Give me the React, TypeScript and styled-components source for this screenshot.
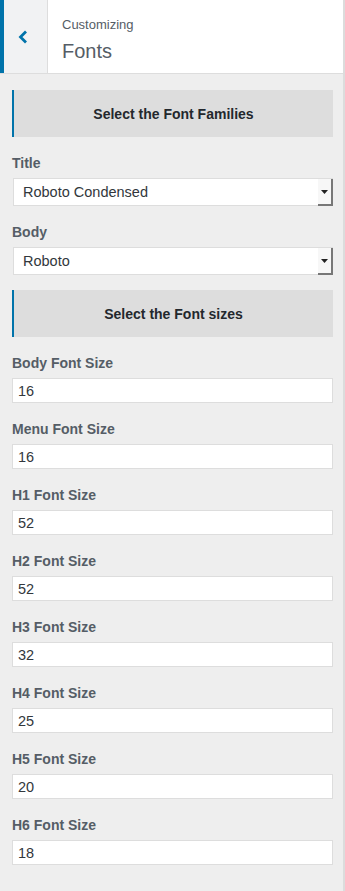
import styled, { createGlobalStyle } from 'styled-components';

const GlobalStyle = createGlobalStyle`
  html, body {
    margin: 0;
    padding: 0;
    background: #eeeeee;
  }
  body {
    font-family: "Liberation Sans", Arial, sans-serif;
    color: #555d66;
  }
`;

const fontSelects = [
  { label: 'Title', value: 'Roboto Condensed' },
  { label: 'Body', value: 'Roboto' },
];

const fontSizes = [
  { label: 'Body Font Size', value: '16' },
  { label: 'Menu Font Size', value: '16' },
  { label: 'H1 Font Size', value: '52' },
  { label: 'H2 Font Size', value: '52' },
  { label: 'H3 Font Size', value: '32' },
  { label: 'H4 Font Size', value: '25' },
  { label: 'H5 Font Size', value: '20' },
  { label: 'H6 Font Size', value: '18' },
];

export default function App() {
  return (
    <>
      <GlobalStyle />
      <Panel>
        <Header>
          <BackButton aria-label="Back">
            <svg width="10" height="14" viewBox="0 0 10 14">
              <path d="M8 1.5 L2.5 7 L8 12.5" fill="none" stroke="#0073aa" strokeWidth="2.8" />
            </svg>
          </BackButton>
          <HeaderText>
            <Crumb>Customizing</Crumb>
            <PanelTitle>Fonts</PanelTitle>
          </HeaderText>
        </Header>

        <Content>
          <Group>
            <SectionHeading>Select the Font Families</SectionHeading>
            {fontSelects.map((item) => (
              <Field key={item.label}>
                <Label>{item.label}</Label>
                <SelectBox>
                  <SelectValue>{item.value}</SelectValue>
                  <SelectArrow>
                    <svg width="7" height="4" viewBox="0 0 7 4">
                      <path d="M0 0 H7 L3.5 4 Z" fill="#222" />
                    </svg>
                  </SelectArrow>
                </SelectBox>
              </Field>
            ))}
          </Group>

          <Group>
            <SectionHeading>Select the Font sizes</SectionHeading>
            {fontSizes.map((item) => (
              <Field key={item.label}>
                <Label>{item.label}</Label>
                <TextInput defaultValue={item.value} />
              </Field>
            ))}
          </Group>
        </Content>
      </Panel>
    </>
  );
}

const Panel = styled.div`
  width: 345px;
  min-height: 891px;
  background: #eeeeee;
  border-right: 2px solid #dcdcdc;
  box-sizing: border-box;
`;

const Header = styled.div`
  display: flex;
  height: 74px;
  background: #ffffff;
  border-bottom: 1px solid #dddddd;
  box-sizing: border-box;
`;

const BackButton = styled.div`
  width: 48px;
  display: flex;
  align-items: center;
  justify-content: center;
  background: #f1f2f3;
  border-left: 4px solid #0073aa;
  border-right: 1px solid #dddddd;
  box-sizing: border-box;
  padding-right: 6px;
`;

const HeaderText = styled.div`
  display: flex;
  flex-direction: column;
  padding: 17px 0 0 14px;
`;

const Crumb = styled.span`
  font-size: 13px;
  line-height: 16px;
  color: #555d66;
`;

const PanelTitle = styled.span`
  font-size: 20px;
  line-height: 26px;
  margin-top: 5px;
  color: #555d66;
`;

const Content = styled.div`
  display: flex;
  flex-direction: column;
  gap: 15px;
  padding: 16px 10px 20px 12px;
`;

const Group = styled.div`
  display: flex;
  flex-direction: column;
  gap: 17px;
`;

const SectionHeading = styled.div`
  height: 47px;
  display: flex;
  align-items: center;
  justify-content: center;
  background: #dddddd;
  border-left: 2px solid #0073aa;
  font-size: 14px;
  font-weight: bold;
  color: #23282d;
`;

const Field = styled.div`
  display: flex;
  flex-direction: column;
`;

const Label = styled.div`
  font-size: 14px;
  font-weight: bold;
  line-height: 18px;
  color: #555d66;
  margin-bottom: 6px;
`;

const SelectBox = styled.div`
  display: flex;
  align-items: stretch;
  height: 28px;
  margin-left: 1px;
  background: #ffffff;
  border: 1px solid #dddddd;
  box-sizing: border-box;
`;

const SelectValue = styled.div`
  flex: 1;
  display: flex;
  align-items: center;
  padding-left: 9px;
  font-size: 14.5px;
  color: #32373c;
`;

const SelectArrow = styled.div`
  width: 15px;
  display: flex;
  align-items: center;
  justify-content: center;
  background: #f7f7f7;
  border-right: 2px solid #777;
  border-bottom: 2px solid #777;
  box-sizing: border-box;
  margin: 0 -1px -1px 0;
`;

const TextInput = styled.input`
  height: 25px;
  padding: 0 5px;
  border: 1px solid #dddddd;
  background: #ffffff;
  font-family: "Liberation Sans", Arial, sans-serif;
  font-size: 14.5px;
  color: #32373c;
  box-sizing: border-box;
  outline: none;
`;
